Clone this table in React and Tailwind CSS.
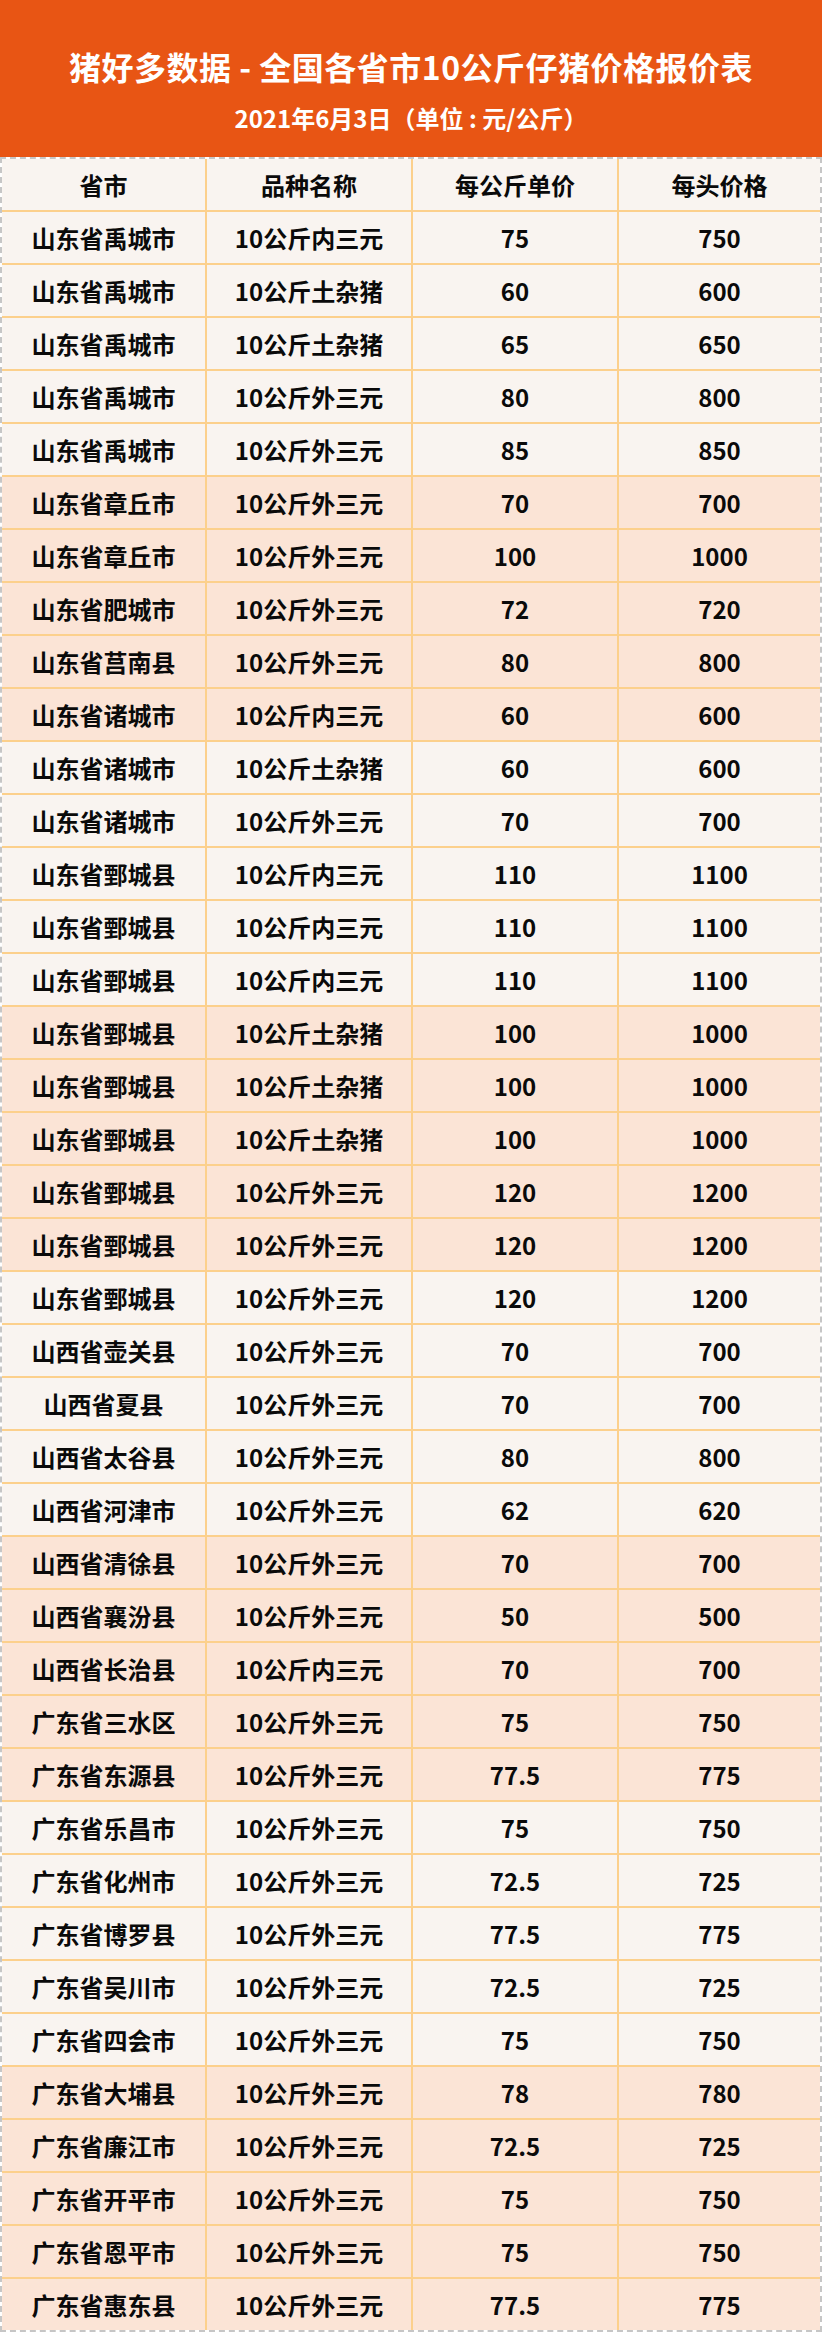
import React from "react";

const rows = [
  ["山东省禹城市", "10公斤内三元", "75", "750"],
  ["山东省禹城市", "10公斤土杂猪", "60", "600"],
  ["山东省禹城市", "10公斤土杂猪", "65", "650"],
  ["山东省禹城市", "10公斤外三元", "80", "800"],
  ["山东省禹城市", "10公斤外三元", "85", "850"],
  ["山东省章丘市", "10公斤外三元", "70", "700"],
  ["山东省章丘市", "10公斤外三元", "100", "1000"],
  ["山东省肥城市", "10公斤外三元", "72", "720"],
  ["山东省莒南县", "10公斤外三元", "80", "800"],
  ["山东省诸城市", "10公斤内三元", "60", "600"],
  ["山东省诸城市", "10公斤土杂猪", "60", "600"],
  ["山东省诸城市", "10公斤外三元", "70", "700"],
  ["山东省鄄城县", "10公斤内三元", "110", "1100"],
  ["山东省鄄城县", "10公斤内三元", "110", "1100"],
  ["山东省鄄城县", "10公斤内三元", "110", "1100"],
  ["山东省鄄城县", "10公斤土杂猪", "100", "1000"],
  ["山东省鄄城县", "10公斤土杂猪", "100", "1000"],
  ["山东省鄄城县", "10公斤土杂猪", "100", "1000"],
  ["山东省鄄城县", "10公斤外三元", "120", "1200"],
  ["山东省鄄城县", "10公斤外三元", "120", "1200"],
  ["山东省鄄城县", "10公斤外三元", "120", "1200"],
  ["山西省壶关县", "10公斤外三元", "70", "700"],
  ["山西省夏县", "10公斤外三元", "70", "700"],
  ["山西省太谷县", "10公斤外三元", "80", "800"],
  ["山西省河津市", "10公斤外三元", "62", "620"],
  ["山西省清徐县", "10公斤外三元", "70", "700"],
  ["山西省襄汾县", "10公斤外三元", "50", "500"],
  ["山西省长治县", "10公斤内三元", "70", "700"],
  ["广东省三水区", "10公斤外三元", "75", "750"],
  ["广东省东源县", "10公斤外三元", "77.5", "775"],
  ["广东省乐昌市", "10公斤外三元", "75", "750"],
  ["广东省化州市", "10公斤外三元", "72.5", "725"],
  ["广东省博罗县", "10公斤外三元", "77.5", "775"],
  ["广东省吴川市", "10公斤外三元", "72.5", "725"],
  ["广东省四会市", "10公斤外三元", "75", "750"],
  ["广东省大埔县", "10公斤外三元", "78", "780"],
  ["广东省廉江市", "10公斤外三元", "72.5", "725"],
  ["广东省开平市", "10公斤外三元", "75", "750"],
  ["广东省恩平市", "10公斤外三元", "75", "750"],
  ["广东省惠东县", "10公斤外三元", "77.5", "775"],
];

const font = { fontFamily: '"Noto Sans CJK SC", "Noto Sans", sans-serif' };

function Row({ cells, pink, header }) {
  return (
    <div
      className={`grid grid-cols-[203px_206px_206px_203px] ${header ? "h-[51px]" : "h-[53px] border-t-2 border-[#fcd08c]"} ${pink ? "bg-[#fbe4d6]" : "bg-[#f9f4f0]"}`}
    >
      {cells.map((c, i) => (
        <div
          key={i}
          className={`flex items-center justify-center text-[24px] font-bold text-[#0a0a0a] leading-none ${i > 0 ? "border-l-2 border-[#fcd08c]" : ""}`}
        >
          {c}
        </div>
      ))}
    </div>
  );
}

export default function App() {
  return (
    <div className="w-[822px] bg-white" style={font}>
      <div className="h-[157px] bg-[#e85514] flex flex-col items-center text-white font-bold">
        <div className="mt-[50px] text-[32px] leading-none tracking-[0.5px]">
          猪好多数据 - 全国各省市10公斤仔猪价格报价表
        </div>
        <div className="mt-[24px] text-[24px] leading-none whitespace-pre">
          2021年6月3日（单位 : 元/公斤）
        </div>
      </div>
      <div className="border-2 border-dashed border-[#c6c6c6]">
        <Row cells={["省市", "品种名称", "每公斤单价", "每头价格"]} header />
        {rows.map((r, i) => (
          <Row key={i} cells={r} pink={Math.floor(i / 5) % 2 === 1} />
        ))}
      </div>
    </div>
  );
}
